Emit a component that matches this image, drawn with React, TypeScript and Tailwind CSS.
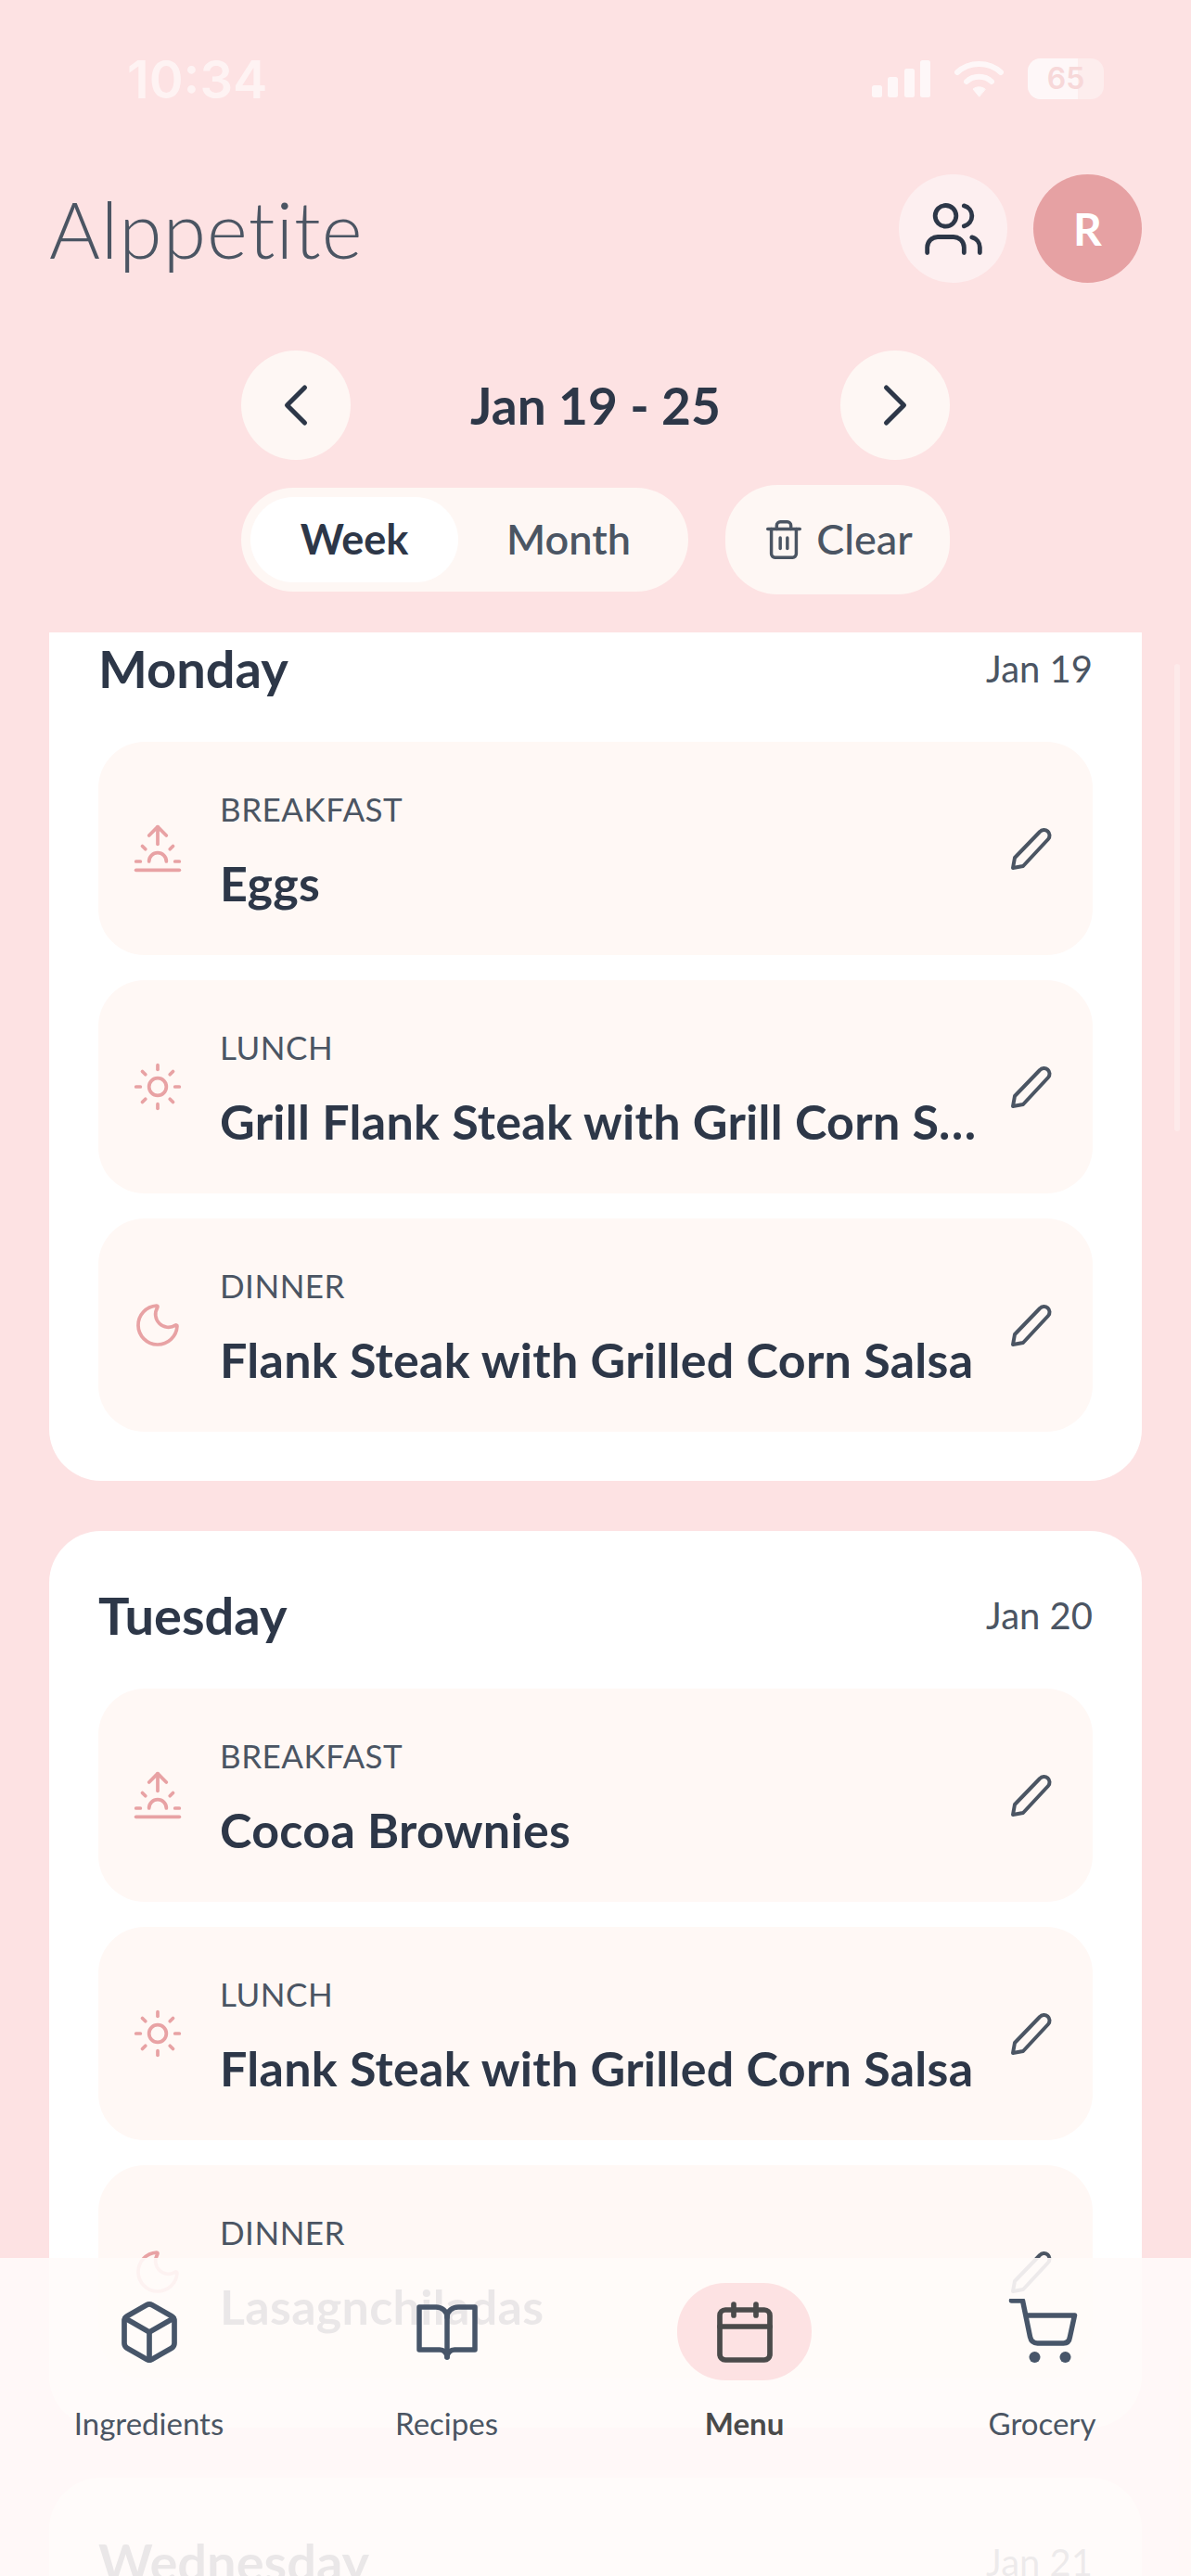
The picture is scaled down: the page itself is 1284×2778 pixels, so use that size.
import { Box, Calendar, ChevronLeft, ChevronRight, Moon, Sun, Sunrise, Trash2, Users } from "lucide-react";

const days = [
  {
    day: "Monday",
    date: "Jan 19",
    meals: ["Eggs", "Grill Flank Steak with Grill Corn Salsa", "Flank Steak with Grilled Corn Salsa"],
  },
  {
    day: "Tuesday",
    date: "Jan 20",
    meals: ["Cocoa Brownies", "Flank Steak with Grilled Corn Salsa", "Lasagnchiladas"],
  },
];

const slots = [
  { label: "BREAKFAST", Icon: Sunrise },
  { label: "LUNCH", Icon: Sun },
  { label: "DINNER", Icon: Moon },
];

function PencilIcon() {
  return (
    <svg width="50" height="50" viewBox="0 0 50 50" fill="none" stroke="#4b5563" strokeWidth="4" strokeLinejoin="round" className="shrink-0">
      <path d="M4 46 L6 35 L33 7 A6 6 0 0 1 42 15 L15 44 Z" />
    </svg>
  );
}

function BookIcon() {
  return (
    <svg width="72" height="72" viewBox="0 0 72 72" fill="none" stroke="currentColor" strokeWidth="5.5" strokeLinejoin="round" strokeLinecap="round">
      <path d="M36 20 C36 13 30 9 24 9 H6 V55 H28 C32 55 36 58 36 63 C36 58 40 55 44 55 H66 V9 H48 C42 9 36 13 36 20 Z" />
      <path d="M36 20 V63" />
    </svg>
  );
}

function CartIcon() {
  return (
    <svg width="80" height="72" viewBox="23.5 59 80 72" fill="none" stroke="currentColor" strokeWidth="5.5" strokeLinejoin="round" strokeLinecap="round">
      <path d="M30 61 H42 L50 100 Q51.5 107 58 107 H86 Q92 107 93 100 L98 77 H46" />
      <circle cx="55" cy="122" r="6" fill="currentColor" stroke="none" />
      <circle cx="88" cy="122" r="6" fill="currentColor" stroke="none" />
    </svg>
  );
}

function StatusBar() {
  return (
    <div className="h-[188px] pt-[56px] pl-[137px] pr-[94px] flex items-start justify-between text-white">
      <span className="text-[56px] leading-[60px] font-semibold opacity-60 [font-family:Inter,sans-serif]">10:34</span>
      <div className="flex items-center gap-[26px] pt-[7px] opacity-75">
        <svg width="63" height="40" viewBox="0 0 63 40" fill="white">
          <rect x="0" y="27" width="11" height="13" rx="2.5" />
          <rect x="17" y="18" width="11" height="22" rx="2.5" />
          <rect x="35" y="9" width="11" height="31" rx="2.5" />
          <rect x="52" y="0" width="11" height="40" rx="2.5" />
        </svg>
        <svg width="53" height="40" viewBox="0 0 53 40" fill="none" stroke="white" strokeWidth="6" strokeLinecap="round">
          <path d="M3 13 C16 1 37 1 50 13" />
          <path d="M13 23 C20 16 33 16 40 23" />
          <path d="M26.5 39 L20 31 C24 28 29 28 33 31 Z" fill="white" strokeWidth="1" />
        </svg>
        <div className="relative w-[82px] h-[44px] rounded-[14px] bg-white/50 overflow-hidden flex items-center justify-center">
          <div className="absolute inset-y-0 left-0 w-[54px] bg-white" />
          <span className="relative text-[32px] font-semibold text-[#f5d5d6] [font-family:Inter,sans-serif]">65</span>
        </div>
      </div>
    </div>
  );
}

function Header() {
  return (
    <div className="h-[117px] px-[53px] flex items-center justify-between">
      <h1 className="text-[84px] leading-none font-light text-[#4b5563] tracking-[1px]">Alppetite</h1>
      <div className="flex items-center gap-[28px]">
        <button className="w-[117px] h-[117px] rounded-full bg-[#fdeff0] flex items-center justify-center text-[#2d3748]">
          <Users size={68} strokeWidth={1.7} />
        </button>
        <div className="w-[117px] h-[117px] rounded-full bg-[#e6a1a3] flex items-center justify-center text-white text-[48px] font-bold">R</div>
      </div>
    </div>
  );
}

function DateControls() {
  return (
    <div className="w-[764px] ml-[260px]">
      <div className="mt-[73px] flex items-center justify-between text-[#2d3748]">
        <button className="w-[118px] h-[118px] rounded-full bg-[#fef7f4] flex items-center justify-center">
          <ChevronLeft size={76} strokeWidth={1.6} />
        </button>
        <span className="text-[55px] font-bold">Jan 19 - 25</span>
        <button className="w-[118px] h-[118px] rounded-full bg-[#fef7f4] flex items-center justify-center">
          <ChevronRight size={76} strokeWidth={1.6} />
        </button>
      </div>
      <div className="mt-[27px] flex items-center justify-between">
        <div className="w-[482px] h-[112px] rounded-[56px] bg-[#fef7f4] flex items-center p-[10px]">
          <div className="w-[224px] h-full rounded-[46px] bg-white flex items-center justify-center text-[45px] font-bold text-[#2d3748]">Week</div>
          <div className="flex-1 flex items-center justify-center text-[45px] font-semibold text-[#4b5563]">Month</div>
        </div>
        <button className="w-[242px] h-[118px] rounded-[56px] bg-[#fef7f4] flex items-center justify-center gap-[12px] text-[#4b5563]">
          <Trash2 size={46} strokeWidth={1.8} />
          <span className="text-[45px] font-medium">Clear</span>
        </button>
      </div>
    </div>
  );
}

function DayHeader({ day, date }: { day: string; date: string }) {
  return (
    <div className="h-[170px] pt-[50px] pb-[38px] flex items-center justify-between">
      <h2 className="text-[56px] leading-[64px] font-bold text-[#2d3748]">{day}</h2>
      <span className="text-[40px] leading-[50px] text-[#4b5563]">{date}</span>
    </div>
  );
}

function DayCard({ day, date, meals }: { day: string; date: string; meals: string[] }) {
  return (
    <section className="mx-[53px] mb-[54px] rounded-[56px] bg-white px-[53px] pb-[53px]">
      <DayHeader day={day} date={date} />
      <div className="flex flex-col gap-[27px]">
        {meals.map((meal, i) => {
          const { label, Icon } = slots[i];
          return (
            <div key={label} className="h-[230px] rounded-[50px] bg-[#fff8f5] pl-[36px] pr-[40px] flex items-center">
              <Icon size={56} strokeWidth={1.6} className="shrink-0 text-[#e8a2a4]" />
              <div className="ml-[39px] mr-[10px] pt-[5px] flex-1 min-w-0">
                <p className="text-[35px] leading-[44px] text-[#4b5563] tracking-[0.5px]">{label}</p>
                <p className="mt-[25px] text-[52px] leading-[66px] font-bold text-[#2d3748] tracking-[0.3px] truncate">{meal}</p>
              </div>
              <PencilIcon />
            </div>
          );
        })}
      </div>
    </section>
  );
}

const tabs = [
  { label: "Ingredients", icon: <Box size={72} strokeWidth={1.9} /> },
  { label: "Recipes", icon: <BookIcon /> },
  { label: "Menu", icon: <Calendar size={72} strokeWidth={1.9} />, active: true },
  { label: "Grocery", icon: <CartIcon /> },
];

function BottomNav() {
  return (
    <nav className="absolute inset-x-0 bottom-0 h-[343px] bg-[#fffbf9]/90 grid grid-cols-4 pt-[27px]">
      {tabs.map(({ label, icon, active }) => (
        <div key={label} className="flex flex-col items-center">
          <div className={`w-[145px] h-[105px] rounded-[52px] flex items-center justify-center ${active ? "bg-[#fde2e3] text-[#4a4a4a]" : "text-[#475569]"}`}>
            {icon}
          </div>
          <span className={`mt-[23px] text-[33px] leading-[46px] ${active ? "font-bold text-[#4a4a4a]" : "text-[#4b5563]"}`}>{label}</span>
        </div>
      ))}
    </nav>
  );
}

export default function App() {
  return (
    <div className="relative w-[1284px] h-[2778px] overflow-hidden bg-[#fde2e3] flex flex-col [font-family:Lato,sans-serif]">
      <StatusBar />
      <Header />
      <DateControls />
      <main className="relative mt-[41px] flex-1 min-h-0 overflow-hidden">
        <div className="-mt-[52px]">
          {days.map((d) => (
            <DayCard key={d.day} {...d} />
          ))}
          <section className="mx-[53px] rounded-[56px] bg-white px-[53px]">
            <DayHeader day="Wednesday" date="Jan 21" />
          </section>
        </div>
        <div className="absolute right-[12px] top-[34px] w-[6px] h-[504px] rounded-full bg-[#fdeaea]" />
      </main>
      <BottomNav />
    </div>
  );
}
